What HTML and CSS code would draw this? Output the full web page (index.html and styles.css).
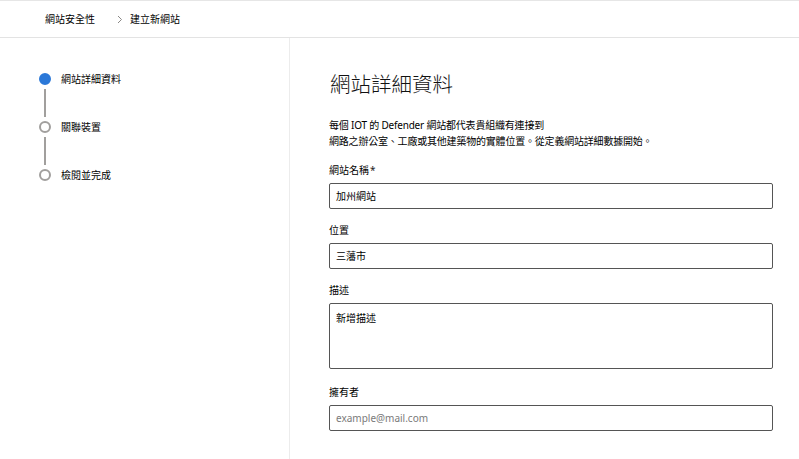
FILE: index.html
```html
<!DOCTYPE html>
<html lang="zh-Hant">
<head>
<meta charset="utf-8">
<title>建立新網站</title>
<link rel="stylesheet" href="styles.css">
</head>
<body>
<header class="topbar">
  <nav class="crumbs">
    <span class="crumb">網站安全性</span>
    <svg class="chev" width="6" height="9" viewBox="0 0 6 9"><polyline points="1,1 4.5,4.5 1,8" fill="none" stroke="#8a8886" stroke-width="1"/></svg>
    <span class="crumb">建立新網站</span>
  </nav>
</header>
<div class="main">
  <aside class="side">
    <div class="step"><span class="dot dot-active"></span><span class="step-label">網站詳細資料</span></div>
    <div class="connector"></div>
    <div class="step"><span class="dot"></span><span class="step-label">關聯裝置</span></div>
    <div class="connector"></div>
    <div class="step"><span class="dot"></span><span class="step-label">檢閱並完成</span></div>
  </aside>
  <section class="content">
    <h1 class="title">網站詳細資料</h1>
    <p class="intro">每個 IOT 的 Defender 網站都代表貴組織有連接到<br>網路之辦公室、工廠或其他建築物的實體位置。從定義網站詳細數據開始。</p>
    <div class="fields">
      <div class="field">
        <label class="label">網站名稱<span class="req">*</span></label>
        <div class="input">加州網站</div>
      </div>
      <div class="field">
        <label class="label">位置</label>
        <div class="input">三藩市</div>
      </div>
      <div class="field field-tall">
        <label class="label">描述</label>
        <div class="input textarea">新增描述</div>
      </div>
      <div class="field">
        <label class="label">擁有者</label>
        <div class="input placeholder">example@mail.com</div>
      </div>
    </div>
  </section>
</div>
</body>
</html>
```
FILE: styles.css
```css
* { box-sizing: border-box; }
html, body { margin: 0; padding: 0; background: #fff; }
body {
  font-family: "Noto Sans", "Noto Sans CJK TC", sans-serif;
  font-size: 10px;
  color: #000;
  width: 799px;
  height: 459px;
  overflow: hidden;
}
.topbar {
  height: 38px;
  border-top: 1px solid #e6e6e6;
  border-bottom: 1px solid #e3e3e3;
  display: flex;
  align-items: center;
}
.crumbs {
  display: flex;
  align-items: center;
  padding-left: 45px;
  line-height: 16px;
}
.chev { margin-left: 22px; margin-right: 7px; }
.main {
  display: flex;
  height: 421px;
}
.side {
  width: 290px;
  flex: none;
  border-right: 1px solid #ececec;
  padding: 35px 0 0 39px;
}
.step {
  display: flex;
  align-items: center;
  gap: 10px;
  height: 12px;
}
.dot {
  width: 12px;
  height: 12px;
  border-radius: 50%;
  border: 2px solid #a19f9d;
  background: #fff;
  flex: none;
}
.dot-active {
  border-color: #2b78d8;
  background: #2b78d8;
}
.step-label { line-height: 16px; color: #000; }
.connector {
  width: 2px;
  height: 28px;
  margin: 4px 0 4px 5px;
  background: #a19f9d;
}
.content {
  flex: 1;
  padding: 32px 0 0 39px;
}
.title {
  margin: 0;
  font-size: 20.5px;
  font-weight: 300;
  line-height: 28px;
  padding-left: 1px;
  color: #111;
}
.intro {
  margin: 19px 0 0 0;
  line-height: 16px;
  color: #000;
  letter-spacing: -0.2px;
}
.fields {
  margin-top: 13px;
  display: flex;
  flex-direction: column;
  gap: 13px;
}
.field {
  display: flex;
  flex-direction: column;
  gap: 5px;
}
.field-tall { margin-bottom: 2px; }
.label {
  line-height: 16px;
  color: #000;
}
.req { color: #222; margin-left: 1px; }
.input {
  width: 444px;
  height: 26px;
  border: 1px solid #555;
  border-radius: 2px;
  padding: 0 6px;
  line-height: 24px;
  color: #000;
}
.textarea {
  height: 66px;
  padding-top: 6px;
  line-height: 16px;
}
.placeholder { color: #7a7a7a; }
```
